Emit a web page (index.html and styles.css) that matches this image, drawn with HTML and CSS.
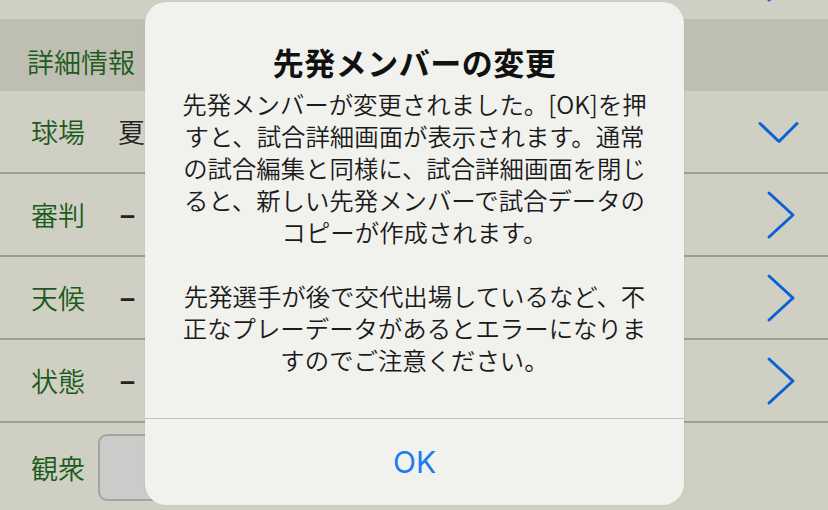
FILE: index.html
```html
<!DOCTYPE html>
<html lang="ja">
<head>
<meta charset="utf-8">
<title>先発メンバーの変更</title>
<link rel="stylesheet" href="styles.css">
</head>
<body>
<div class="screen">
  <div class="top-strip">
    <svg class="chev" width="50" height="19" viewBox="0 0 50 19"><path d="M38 -22 L14 0" /></svg>
  </div>
  <div class="section-header"><span class="section-title">詳細情報</span></div>
  <div class="row">
    <span class="label">球場</span><span class="value">夏</span>
    <svg class="chev" width="50" height="50" viewBox="0 0 50 50"><path d="M5 16.5 L24 34.5 L42 16.5" /></svg>
  </div>
  <div class="row">
    <span class="label">審判</span><span class="value dash">–</span>
    <svg class="chev" width="50" height="50" viewBox="0 0 50 50"><path d="M14 3 L38 25 L14 47" /></svg>
  </div>
  <div class="row">
    <span class="label">天候</span><span class="value dash">–</span>
    <svg class="chev" width="50" height="50" viewBox="0 0 50 50"><path d="M14 3 L38 25 L14 47" /></svg>
  </div>
  <div class="row">
    <span class="label">状態</span><span class="value dash">–</span>
    <svg class="chev" width="50" height="50" viewBox="0 0 50 50"><path d="M14 3 L38 25 L14 47" /></svg>
  </div>
  <div class="row row-last">
    <span class="label">観衆</span>
    <div class="field"></div>
  </div>

  <div class="alert">
    <div class="alert-body">
      <div class="alert-title">先発メンバーの変更</div>
      <p class="alert-msg">先発メンバーが変更されました。[OK]を押<br>すと、試合詳細画面が表示されます。通常<br>の試合編集と同様に、試合詳細画面を閉じ<br>ると、新しい先発メンバーで試合データの<br>コピーが作成されます。</p>
      <p class="alert-msg">先発選手が後で交代出場しているなど、不<br>正なプレーデータがあるとエラーになりま<br>すのでご注意ください。</p>
    </div>
    <div class="alert-button">OK</div>
  </div>
</div>
</body>
</html>
```

FILE: styles.css
```css
html, body {
  margin: 0;
  padding: 0;
}

body {
  width: 828px;
  height: 510px;
  overflow: hidden;
  font-family: "Noto Sans CJK JP", "Noto Sans", sans-serif;
}

.screen {
  position: relative;
  width: 828px;
  height: 510px;
  display: flex;
  flex-direction: column;
  background: #cfcfc3;
}

.top-strip {
  height: 19px;
  flex: none;
  display: flex;
  justify-content: flex-end;
  padding-right: 23px;
  background: #cfcfc3;
}

.section-header {
  height: 72px;
  flex: none;
  box-sizing: border-box;
  display: flex;
  align-items: center;
  padding: 14px 0 0 27px;
  background: #bebfb2;
}

.section-title {
  font-size: 27px;
  line-height: 32px;
  font-weight: 350;
  color: #1d5a1d;
}

.row {
  height: 81px;
  flex: none;
  display: flex;
  align-items: center;
  padding-left: 31px;
  padding-right: 23px;
  border-bottom: 2px solid #9d9d9a;
  background: #cfcfc3;
}

.row-last {
  border-bottom: none;
  height: 87px;
  padding-top: 1px;
}

.label {
  font-size: 27px;
  line-height: 32px;
  font-weight: 350;
  color: #1d5a1d;
  width: 54px;
  flex: none;
}

.value {
  margin-left: 33px;
  font-size: 27px;
  line-height: 32px;
  font-weight: 350;
  color: #222;
}

.value.dash {
  margin-left: 35px;
  font-family: "Liberation Sans", sans-serif;
  font-weight: bold;
}

.chev {
  margin-left: auto;
  flex: none;
  overflow: visible;
}

.chev path {
  fill: none;
  stroke: #0b62d6;
  stroke-width: 3;
  stroke-linecap: round;
  stroke-linejoin: round;
}

.field {
  margin-left: 13px;
  width: 500px;
  height: 67px;
  box-sizing: border-box;
  border: 2px solid #a3a39f;
  border-radius: 9px;
  background: #cbcbca;
}

.alert {
  position: absolute;
  left: 145px;
  top: 2px;
  width: 539px;
  height: 503px;
  border-radius: 21px;
  background: #f1f1ee;
  display: flex;
  flex-direction: column;
  overflow: hidden;
  box-shadow: 0 0 2px rgba(0, 0, 0, 0.08);
}

.alert-body {
  flex: 1;
  padding-top: 40px;
  text-align: center;
  color: #111;
}

.alert-title {
  font-size: 31px;
  line-height: 40px;
  font-weight: bold;
  letter-spacing: 0.5px;
}

.alert-msg {
  margin: 6px 0 32px;
  font-size: 24.4px;
  line-height: 32px;
  font-weight: 350;
  color: #1a1a1a;
}

.alert-msg + .alert-msg {
  margin-top: 0;
}

.alert-button {
  height: 86px;
  flex: none;
  border-top: 1px solid #c2c2bf;
  display: flex;
  align-items: center;
  justify-content: center;
  font-family: "Inter", "Liberation Sans", sans-serif;
  font-size: 30px;
  color: #1a7cf4;
}
```
